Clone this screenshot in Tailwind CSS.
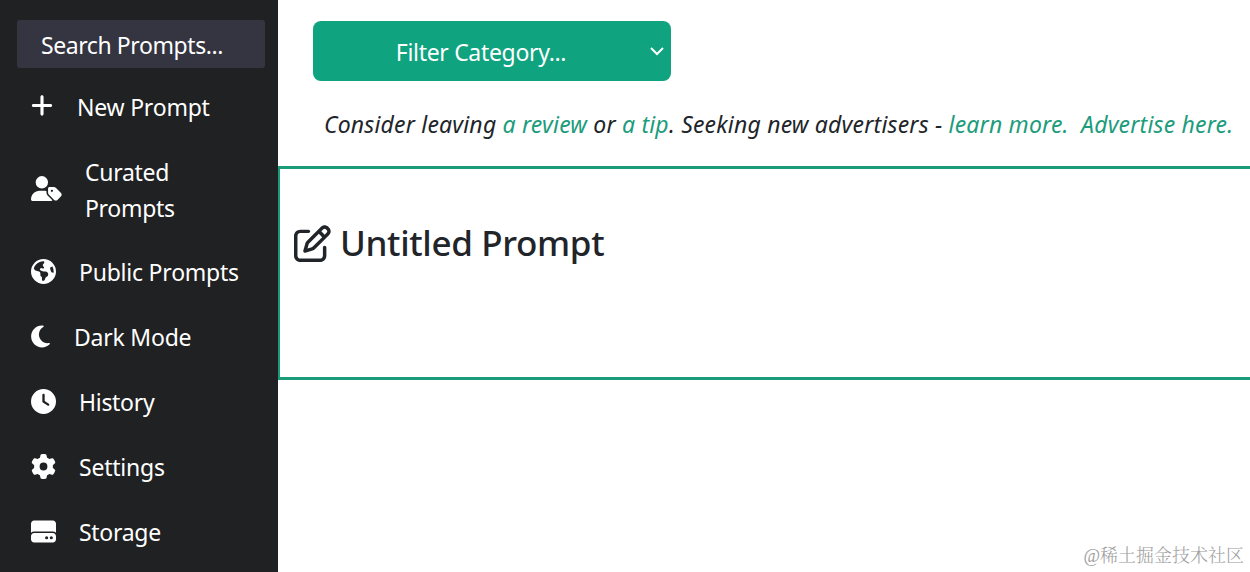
<!DOCTYPE html>
<html lang="en">
<head>
  <meta charset="UTF-8" />
  <meta name="viewport" content="width=device-width, initial-scale=1.0"/>
  <title>Prompts</title>
  <script src="https://cdn.jsdelivr.net/npm/@tailwindcss/browser@4"></script>
</head>
<body class="bg-white font-['Noto_Sans','Open_Sans',sans-serif] text-2xl text-[#212529] overflow-hidden">
  <div class="flex h-screen">
    <!-- Sidebar -->
    <aside class="w-[278px] shrink-0 bg-[#202123] text-white pt-5 px-[17px] overflow-hidden">
      <input type="text" placeholder="Search Prompts..." class="block w-[248px] h-12 pl-6 pt-[2px] rounded-[3px] bg-[#343541] text-[23px] tracking-[-0.42px] placeholder:text-white outline-none">
      <nav class="mt-[6px] text-[23px]">
        <a href="#" class="flex items-center h-[65px] pt-[2px] pl-[14px] gap-[24px] tracking-[-0.22px]">
          <svg class="w-[22px] h-[25px] -mt-[4px] shrink-0" viewBox="0 0 448 512" fill="currentColor"><path d="M256 80c0-17.7-14.3-32-32-32s-32 14.3-32 32V224H48c-17.7 0-32 14.3-32 32s14.3 32 32 32H192V432c0 17.7 14.3 32 32 32s32-14.3 32-32V288H400c17.7 0 32-14.3 32-32s-14.3-32-32-32H256V80z"/></svg>
          <span>New Prompt</span>
        </a>
        <a href="#" class="flex items-center h-[101px] pl-[14px] gap-[23px] leading-9 tracking-[-0.3px]">
          <svg class="w-[31px] h-[25px] -mt-[2px] shrink-0" viewBox="0 0 640 512" fill="currentColor"><path d="M224 256A128 128 0 1 0 224 0a128 128 0 1 0 0 256zm-45.7 48C79.8 304 0 383.8 0 482.3C0 498.7 13.3 512 29.7 512H418.3c10 0 18.8-4.9 24.2-12.5l-99.2-99.2c-14.9-14.9-23.3-35.1-23.3-56.1v-33c-15.9-4.7-32.8-7.2-50.3-7.2H178.3zM384 224c-17.7 0-32 14.3-32 32v82.7c0 17 6.7 33.3 18.7 45.3L478.1 491.3c18.7 18.7 49.1 18.7 67.9 0l73.4-73.4c18.7-18.7 18.7-49.1 0-67.9L512 242.7c-12-12-28.3-18.7-45.3-18.7H384zm24 80a24 24 0 1 1 48 0 24 24 0 1 1 -48 0z"/></svg>
          <span>Curated<br>Prompts</span>
        </a>
        <a href="#" class="flex items-center h-[65px] pl-[14px] gap-[23px] tracking-[-0.22px]">
          <svg class="w-[25px] h-[25px] -mt-[3px] shrink-0" viewBox="0 0 512 512" fill="currentColor"><path d="M57.7 193l9.4 16.4c8.3 14.5 21.9 25.2 38 29.8L163 255.7c17.2 4.9 29 20.6 29 38.5v39.9c0 11 6.2 21 16 25.9s16 14.9 16 25.9v39c0 15.6 14.9 26.9 29.9 22.6c16.1-4.6 28.6-17.5 32.7-33.8l2.8-11.2c4.2-16.9 15.2-31.4 30.3-40l8.1-4.6c15-8.5 24.2-24.5 24.2-41.7v-8.3c0-12.7-5.1-24.9-14.1-33.9l-3.9-3.9c-9-9-21.2-14.1-33.9-14.1H257c-11.1 0-22.1-2.9-31.8-8.4l-34.5-19.7c-4.3-2.5-7.6-6.5-9.2-11.2c-3.2-9.6 1.1-20 10.2-24.5l5.9-3c6.6-3.3 14.3-3.9 21.3-1.5l23.2 7.7c8.2 2.7 17.2-.4 21.9-7.5c4.7-7 4.2-16.3-1.2-22.8l-13.6-16.3c-10-12-9.9-29.5 .3-41.3l15.7-18.3c8.8-10.3 10.2-25 3.5-36.7l-2.4-4.2c-3.5-.2-6.9-.3-10.4-.3C163.1 48 84.4 108.9 57.7 193zM464 256c0-36.8-9.6-71.4-26.4-101.5L412 164.8c-15.7 6.3-23.8 23.8-18.5 39.8l16.9 50.7c3.5 10.4 12 18.3 22.6 20.9l29.1 7.3c1.2-9 1.8-18.2 1.8-27.5zM0 256a256 256 0 1 1 512 0A256 256 0 1 1 0 256z"/></svg>
          <span>Public Prompts</span>
        </a>
        <a href="#" class="flex items-center h-[65px] pl-[14px] gap-[24px] tracking-[-0.22px]">
          <svg class="w-[19px] h-[25px] -mt-[3px] shrink-0" viewBox="0 0 384 512" fill="currentColor"><path d="M223.5 32C100 32 0 132.3 0 256S100 480 223.5 480c60.6 0 115.5-24.2 155.8-63.4c5-4.9 6.3-12.5 3.1-18.7s-10.1-9.7-17-8.5c-9.8 1.7-19.8 2.6-30.1 2.6c-96.9 0-175.5-78.8-175.5-176c0-65.8 36-123.1 89.3-153.3c6.1-3.5 9.2-10.5 7.7-17.3s-7.3-11.9-14.3-12.5c-6.3-.5-12.6-.8-19-.8z"/></svg>
          <span>Dark Mode</span>
        </a>
        <a href="#" class="flex items-center h-[65px] pl-[14px] gap-[23px] tracking-[-0.3px]">
          <svg class="w-[25px] h-[25px] -mt-[3px] shrink-0" viewBox="0 0 512 512" fill="currentColor"><path d="M256 0a256 256 0 1 1 0 512A256 256 0 1 1 256 0zM232 120V256c0 8 4 15.5 10.7 20l96 64c11 7.4 25.9 4.4 33.3-6.7s4.4-25.9-6.7-33.3L280 243.2V120c0-13.3-10.7-24-24-24s-24 10.7-24 24z"/></svg>
          <span>History</span>
        </a>
        <a href="#" class="flex items-center h-[65px] pl-[14px] gap-[23px] tracking-[-0.22px]">
          <svg class="w-[25px] h-[25px] -mt-[3px] shrink-0" viewBox="0 0 512 512" fill="currentColor"><path d="M495.9 166.6c3.2 8.7 .5 18.4-6.4 24.6l-43.3 39.4c1.1 8.3 1.7 16.8 1.7 25.4s-.6 17.1-1.7 25.4l43.3 39.4c6.9 6.2 9.6 15.9 6.4 24.6c-4.4 11.9-9.7 23.3-15.8 34.3l-4.7 8.1c-6.6 11-14 21.4-22.1 31.2c-5.9 7.2-15.7 9.6-24.5 6.8l-55.7-17.7c-13.4 10.3-28.2 18.9-44 25.4l-12.5 57.1c-2 9.1-9 16.3-18.2 17.8c-13.8 2.3-28 3.5-42.5 3.5s-28.7-1.2-42.5-3.5c-9.2-1.5-16.2-8.7-18.2-17.8l-12.5-57.1c-15.8-6.5-30.6-15.1-44-25.4L83.1 425.9c-8.8 2.8-18.6 .3-24.5-6.8c-8.1-9.8-15.5-20.2-22.1-31.2l-4.7-8.1c-6.1-11-11.4-22.4-15.8-34.3c-3.2-8.7-.5-18.4 6.4-24.6l43.3-39.4C64.6 273.1 64 264.6 64 256s.6-17.1 1.7-25.4L22.4 191.2c-6.9-6.2-9.6-15.9-6.4-24.6c4.4-11.9 9.7-23.3 15.8-34.3l4.7-8.1c6.6-11 14-21.4 22.1-31.2c5.9-7.2 15.7-9.6 24.5-6.8l55.7 17.7c13.4-10.3 28.2-18.9 44-25.4l12.5-57.1c2-9.1 9-16.3 18.2-17.8C227.3 1.2 241.5 0 256 0s28.7 1.2 42.5 3.5c9.2 1.5 16.2 8.7 18.2 17.8l12.5 57.1c15.8 6.5 30.6 15.1 44 25.4l55.7-17.7c8.8-2.8 18.6-.3 24.5 6.8c8.1 9.8 15.5 20.2 22.1 31.2l4.7 8.1c6.1 11 11.4 22.4 15.8 34.3zM256 336a80 80 0 1 0 0-160 80 80 0 1 0 0 160z"/></svg>
          <span>Settings</span>
        </a>
        <a href="#" class="flex items-center h-[65px] pl-[14px] gap-[23px] tracking-[-0.3px]">
          <svg class="w-[25px] h-[25px] -mt-[3px] shrink-0" viewBox="0 0 512 512" fill="currentColor"><path d="M0 96C0 60.7 28.7 32 64 32H448c35.3 0 64 28.7 64 64V280.4c-17-15.2-39.4-24.4-64-24.4H64c-24.6 0-47 9.2-64 24.4V96zM64 288H448c35.3 0 64 28.7 64 64v64c0 35.3-28.7 64-64 64H64c-35.3 0-64-28.7-64-64V352c0-35.3 28.7-64 64-64zM320 416a32 32 0 1 0 0-64 32 32 0 1 0 0 64zm128-32a32 32 0 1 0 -64 0 32 32 0 1 0 64 0z"/></svg>
          <span>Storage</span>
        </a>
      </nav>
    </aside>

    <!-- Main content -->
    <main class="flex-1 min-w-0 flex flex-col">
      <div class="pt-[21px] pl-[35px]">
        <button class="flex items-center w-[358px] h-[60px] rounded-lg bg-[#0fa37f] text-white text-[23px] tracking-[-0.32px]">
          <span class="flex-1 text-center pt-[3px]">Filter Category...</span>
          <svg class="w-4 h-4 mr-[6px]" viewBox="0 0 16 16" fill="none" stroke="currentColor" stroke-width="2"><path d="M2 5l6 6 6-6"/></svg>
        </button>
      </div>
      <p class="mt-[25px] ml-[46px] h-[60px] leading-9 text-[23px] italic whitespace-nowrap tracking-[0.19px]">Consider leaving <a href="#" class="text-[#1c9c7c]">a review</a> or <a href="#" class="text-[#1c9c7c]">a tip</a>. Seeking new advertisers - <a href="#" class="text-[#1c9c7c]">learn more.</a>&nbsp; <a href="#" class="text-[#1c9c7c]">Advertise here.</a></p>

      <section class="h-[214px] border-y-3 border-l-2 border-[#1a9c7b] pt-[47px] pl-[14px]">
        <h1 class="flex items-center gap-[9px] h-[54px] text-[35px] font-medium">
          <svg class="w-[37px] h-[37px] shrink-0" viewBox="0 0 512 512" fill="currentColor"><path d="M441 58.9L453.1 71c9.4 9.4 9.4 24.6 0 33.9L424 134.1 377.9 88 407 58.9c9.4-9.4 24.6-9.4 33.9 0zM209.8 256.2L344 121.9 390.1 168 255.8 302.2c-2.9 2.9-6.5 5-10.4 6.1l-58.5 16.7 16.7-58.5c1.1-3.9 3.2-7.5 6.1-10.4zM373.1 25L175.8 222.2c-8.7 8.7-15 19.4-18.3 31.1l-28.6 100c-2.4 8.4-.1 17.4 6.1 23.6s15.2 8.5 23.6 6.1l100-28.6c11.8-3.4 22.5-9.7 31.1-18.3L487 138.9c28.1-28.1 28.1-73.7 0-101.8L474.9 25C446.8-3.1 401.2-3.1 373.1 25zM88 64C39.4 64 0 103.4 0 152V424c0 48.6 39.4 88 88 88H360c48.6 0 88-39.4 88-88V312c0-13.3-10.7-24-24-24s-24 10.7-24 24V424c0 22.1-17.9 40-40 40H88c-22.1 0-40-17.9-40-40V152c0-22.1 17.9-40 40-40H200c13.3 0 24-10.7 24-24s-10.7-24-24-24H88z"/></svg>
          <span class="tracking-[-0.35px]">Untitled Prompt</span>
        </h1>
      </section>

      <p class="mt-auto mr-[6px] mb-[3px] text-right text-[18px] leading-[26px] font-light text-[#a0a0a0] font-['Liberation_Serif','Noto_Serif_CJK_SC','Noto_Sans_CJK_SC',serif]">@稀土掘金技术社区</p>
    </main>
  </div>
</body>
</html>
